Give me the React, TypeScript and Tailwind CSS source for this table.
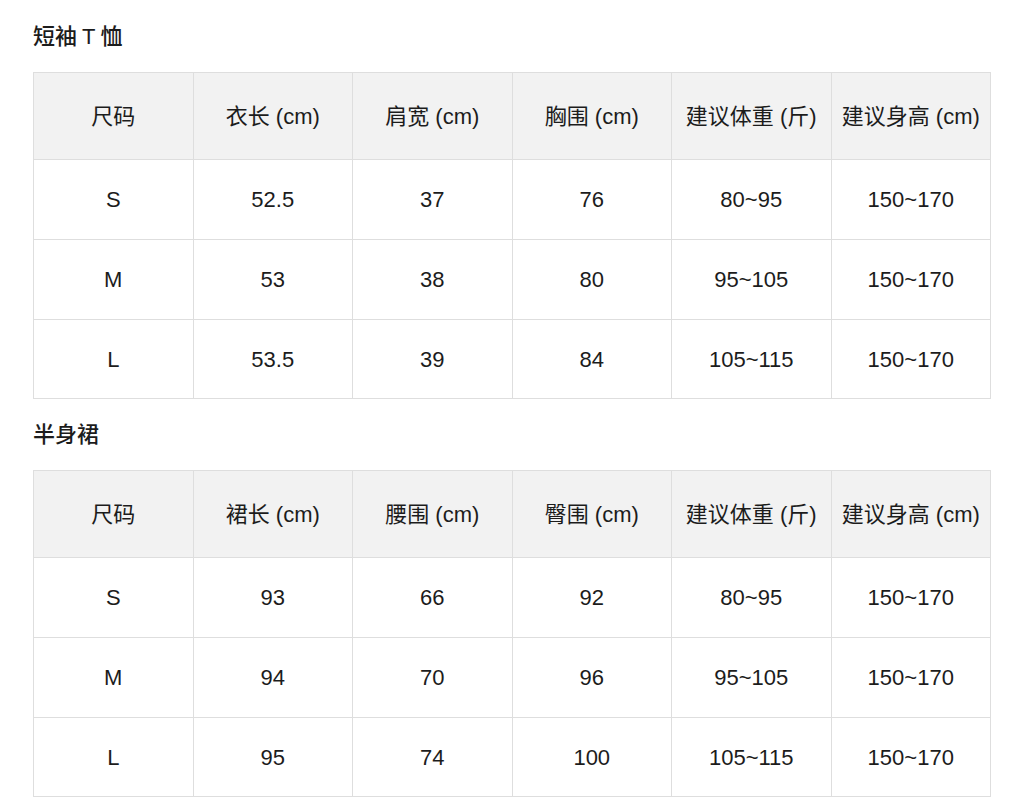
const tshirt = {
  head: ['尺码', '衣长 (cm)', '肩宽 (cm)', '胸围 (cm)', '建议体重 (斤)', '建议身高 (cm)'],
  rows: [
    ['S', '52.5', '37', '76', '80~95', '150~170'],
    ['M', '53', '38', '80', '95~105', '150~170'],
    ['L', '53.5', '39', '84', '105~115', '150~170'],
  ],
}

const skirt = {
  head: ['尺码', '裙长 (cm)', '腰围 (cm)', '臀围 (cm)', '建议体重 (斤)', '建议身高 (cm)'],
  rows: [
    ['S', '93', '66', '92', '80~95', '150~170'],
    ['M', '94', '70', '96', '95~105', '150~170'],
    ['L', '95', '74', '100', '105~115', '150~170'],
  ],
}

function SizeTable({ head, rows }: { head: string[]; rows: string[][] }) {
  return (
    <div className="grid grid-cols-6 border-l border-t border-[#dedede]">
      {head.map((h) => (
        <div
          key={h}
          className="flex h-[87px] items-center justify-center border-b border-r border-[#dedede] bg-[#f2f2f2] whitespace-nowrap"
        >
          {h}
        </div>
      ))}
      {rows.map((r, i) =>
        r.map((c, j) => (
          <div
            key={i + '-' + j}
            className={
              'flex items-center justify-center border-b border-r border-[#dedede] ' +
              (i === rows.length - 1 ? 'h-[79px]' : 'h-[80px]')
            }
          >
            {c}
          </div>
        ))
      )}
    </div>
  )
}

export default function App() {
  return (
    <div
      className="min-h-screen bg-white px-[33px] pt-[22px] text-[22px] text-[#1c1c1c]"
      style={{ fontFamily: '"Liberation Sans", "Noto Sans CJK SC", sans-serif' }}
    >
      <h2 className="mb-[20px] text-[22px] font-medium leading-[30px]">
        短袖<span className="mx-[5px]">T</span>恤
      </h2>
      <SizeTable head={tshirt.head} rows={tshirt.rows} />

      <h2 className="mb-[20px] mt-[21px] text-[22px] font-medium leading-[30px]">半身裙</h2>
      <SizeTable head={skirt.head} rows={skirt.rows} />
    </div>
  )
}
